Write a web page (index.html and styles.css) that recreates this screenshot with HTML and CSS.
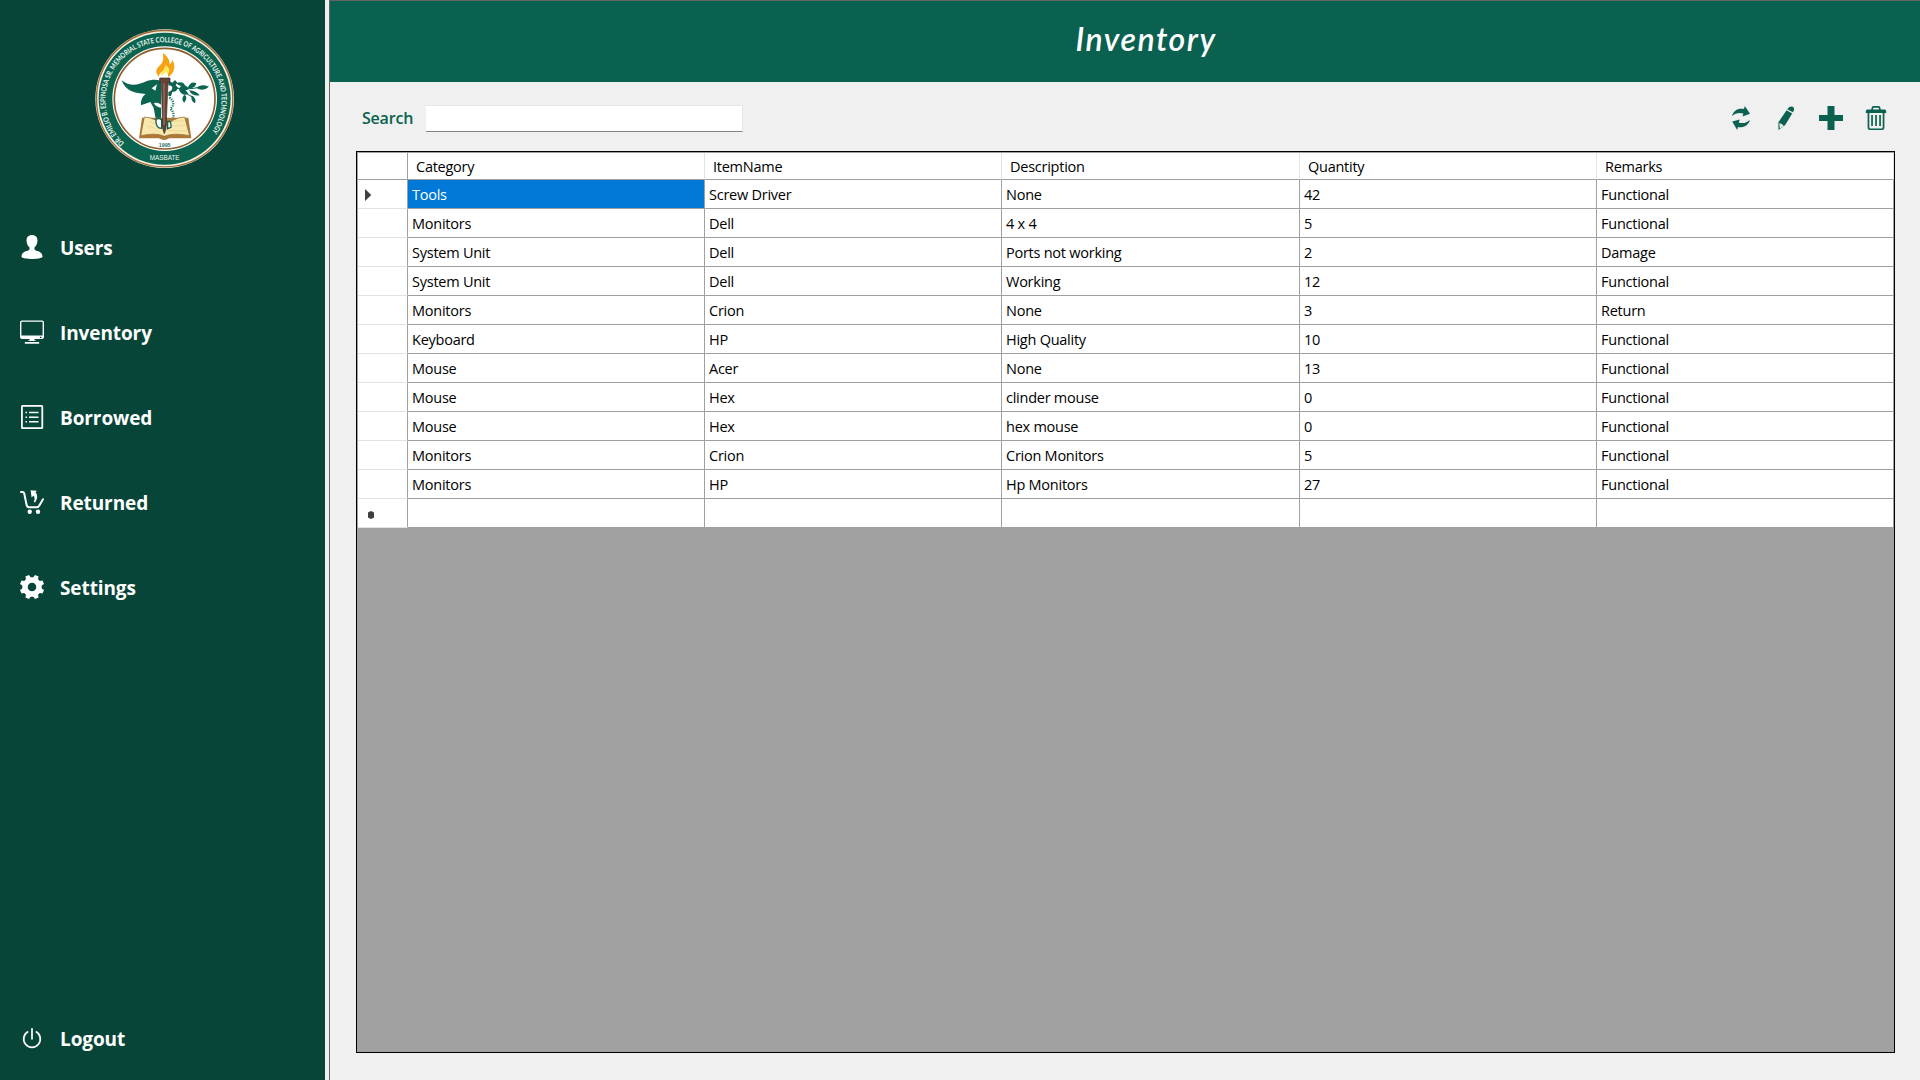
FILE: index.html
```html
<!DOCTYPE html>
<html lang="en">
<head>
<meta charset="utf-8">
<title>Inventory</title>
<link rel="stylesheet" href="styles.css">
</head>
<body>
<div class="app">
  <aside class="sidebar">
    <svg class="seal" viewBox="0 0 480 468">
      <defs>
        <path id="ring" d="M118 369 A174 174 0 1 1 363 359"/>
      </defs>
      <circle cx="239" cy="236" r="208" fill="#f6f1e4"/>
      <circle cx="239" cy="236" r="204.500" fill="none" stroke="#a06a35" stroke-width="4"/>
      <circle cx="239" cy="236" r="198" fill="#0b6450"/>
      <circle cx="239" cy="236" r="157" fill="#fff"/>
      <circle cx="239" cy="236" r="151" fill="#fff" stroke="#8d5d2c" stroke-width="5"/>
      <text class="seal-ring"><textPath href="#ring" textLength="792" lengthAdjust="spacingAndGlyphs">DR. EMILIO B. ESPINOSA SR. MEMORIAL STATE COLLEGE OF AGRICULTURE AND TECHNOLOGY</textPath></text>
      <text class="seal-place" x="239" y="421">MASBATE</text>
      <text class="seal-year" x="239" y="380">1995</text>
      <path fill="#0b6450" d="M110 181C138 204 164 192 184 184C200 178 216 178 228 183V300L212 296L206 264L196 246L168 256Q166 232 182 222C150 219 122 215 110 181Z"/>
      <path fill="#0b6450" d="M250 182L262 188L270 180L277 188L272 196L280 204L272 214L262 216L258 228H250V216Q262 212 262 204Q262 196 250 196Z"/>
      <path fill="#fff" d="M200 205L216 193L211 212ZM206 249Q220 246 228 254V263Q214 262 206 249Z"/>
      <path fill="#0b6450" d="M281 206Q296 184 312 206Q296 218 281 206ZM274 189Q294 182 300 196Q284 204 274 189ZM308 204Q318 182 334 190Q330 208 308 204ZM334 204Q346 190 372 200Q354 216 334 204ZM282 210Q304 206 310 222Q292 230 282 210ZM312 211Q334 212 344 226Q322 230 312 211ZM298 224Q310 230 298 248Q286 238 298 224ZM320 226Q336 236 330 250Q316 244 320 226Z"/>
      <path fill="none" stroke="#0b6450" stroke-width="3" d="M270 204Q310 210 342 202M282 208L324 232"/>
      <path fill="none" stroke="#2f8069" stroke-width="7" stroke-dasharray="4 3" d="M253 232Q275 250 256 266Q274 283 258 306L263 317"/>
      <path fill="#ad7938" d="M171 293L162 355H222Q239 365 252 355H319L310 293Z"/>
      <path fill="#f9e8ad" stroke="#8d622e" stroke-width="2" d="M178 291Q217 293 238 325Q260 293 299 291L314 347Q266 337 238 349Q214 337 167 347Z"/>
      <path fill="none" stroke="#e3cd8e" stroke-width="2" d="M191 304Q214 308 224 325M185 318Q208 320 222 338M263 304L296 302M257 318L301 317M251 332L305 333"/>
      <path fill="#fff" stroke="#0b6450" stroke-width="4" d="M213 298Q222 292 230 300V325Q211 325 213 298ZM248 304Q260 302 258 322L248 326Z"/>
      <path fill="#664336" stroke="#3d2824" stroke-width="2" d="M224 174H255V187H249L243 326L238 341L233 326L229 187H224Z"/>
      <path stroke="#a78168" stroke-width="3" d="M237 190V315"/>
      <path fill="#f5a314" d="M222 171C204 151 220 143 230 130C239 117 232 106 235 99C251 114 256 125 253 134C264 124 260 122 262 119C276 142 264 163 249 171C251 157 242 146 240 139C238 156 221 157 222 171Z"/>
      <path fill="#ffe75a" d="M227 168C226 155 245 149 241 133C252 146 259 149 248 163C243 157 242 157 242 157Z"/>
    </svg>

    <nav class="menu">
      <a class="item">
        <svg class="icon" viewBox="0 0 24 24"><path d="M12 0C8 0 6.200 2.800 6.600 6.500C6.800 9 8 11 9.500 12.600C10 14.800 8.800 15.300 6.500 16.100C3 17.300 1.500 18.700 1.500 22C4 24.600 20 24.600 22.500 22C22.500 18.700 21 17.300 17.500 16.100C15.200 15.300 14 14.800 14.500 12.600C16 11 17.200 9 17.400 6.500C17.800 2.800 16 0 12 0Z"/></svg>
        <span>Users</span>
      </a>
      <a class="item">
        <svg class="icon" viewBox="0 0 24 24"><path fill-rule="evenodd" d="M2 .4H22Q24 .4 24 2.400V17Q24 19 22 19H14.500V20.500H16V21H8V20.500H9.500V19H2Q0 19 0 17V2.400Q0 .4 2 .4ZM1.400 2.300V15.500H22.600V2.300Q22.600 1.700 22 1.700H2Q1.400 1.700 1.400 2.300Z"/><path d="M5 22H19Q20 23.800 18.500 23.800H5.500Q4 23.800 5 22Z"/><path class="speck" d="M20 16.700h1.500v1.200H20z"/></svg>
        <span>Inventory</span>
      </a>
      <a class="item">
        <svg class="icon line" viewBox="0 0 24 24"><rect x="1.900" y=".9" width="20.400" height="22.200" rx=".7" stroke-width="1.800"/><path stroke-width="1.600" d="M9 7.500H18.500M9 12.200H18.500M9 16.800H18.500M5.500 7.500H7M5.500 12.200H7M5.500 16.800H7"/></svg>
        <span>Borrowed</span>
      </a>
      <a class="item">
        <svg class="icon" viewBox="0 0 24 24"><path class="stroke" d="M1 2H2.500Q3.800 2 4.200 3.300L6.500 14.500Q7.100 17.300 9 17.300H16.800Q18.500 17.300 19.200 15.700L23 9.300"/><circle cx="9.700" cy="21.800" r="2.200"/><circle cx="18" cy="21.800" r="2.200"/><path d="M10.600 .2L16.800 .7L15.500 2.600C17.500 4.600 18.200 8.300 15 12.400L13.800 11.800C15.200 9 14.800 6.800 13.300 5.700L11.600 7.600Z"/></svg>
        <span>Returned</span>
      </a>
      <a class="item">
        <svg class="icon" viewBox="0 0 24 24"><path fill-rule="evenodd" d="M6.500 .9L9 0L10.600 2.300H13.400L15 0L18.600 1.500L18 4.200L19.800 6L22.500 5.400L24 9L21.700 10.600V13.400L24 15L22.500 18.600L19.800 18L18 19.800L18.600 22.500L15 24L13.400 21.700H10.600L9 24L5.400 22.500L6 19.800L4.200 18L1.500 18.600L0 15L2.300 13.400V10.600L0 9L1.500 5.400L4.200 6L6 4.200L5.400 1.500ZM12 7.700A4.300 4.300 0 1 0 12 16.300A4.300 4.300 0 1 0 12 7.700Z"/></svg>
        <span>Settings</span>
      </a>
      <a class="item logout">
        <svg class="icon line" viewBox="0 0 24 24"><path stroke-width="1.700" d="M12 2.200V13.500M8.200 5.600A8.300 8.300 0 1 0 15.800 5.600"/></svg>
        <span>Logout</span>
      </a>
    </nav>
  </aside>

  <main class="panel">
    <header class="banner"><h1>Inventory</h1></header>
    <section class="content">
      <div class="toolbar">
        <label class="search-label" for="search">Search</label>
        <input class="search" id="search" type="text">
        <div class="actions">
          <svg class="tool" viewBox="0 0 24 24"><path d="M3 10C4.500 4.500 9 1.800 15 3L15.800 0L21 7.800L13.500 10.600L14.300 7.600C10 6.300 6.500 7 3 10ZM21 14C19.500 19.500 14 22.200 9 21L8.200 24L3.200 15.500L10.800 13.400L9.700 16.500C14 17.800 17.500 17 21 14Z"/></svg>
          <svg class="tool" viewBox="0 0 24 24"><path d="M13.800 2.500Q16-.5 18.800 .8Q21 2.200 19.500 5.200L18.900 6.200L13.200 3.200ZM12.600 4.300L18.200 7.400L11.200 19L4.500 24L4.400 16.200Z"/><path class="cut" d="M5.300 17.300Q7.800 17 9.800 20L5.800 22.600Z"/></svg>
          <svg class="tool" viewBox="0 0 24 24"><path d="M8.500 0H15.500V9H24V15H15.500V24H8.500V15H0V9H8.500Z"/></svg>
          <svg class="tool" viewBox="0 0 24 24"><path fill-rule="evenodd" d="M7.200 3.500L7.800 1.200Q8.200 0 9.500 0H14.500Q15.800 0 16.200 1.200L16.800 3.500H20.500Q22 3.500 22.200 5V7H20.400V21.500Q20.400 24 17.900 24H6.100Q3.600 24 3.600 21.500V7H1.800V5Q2 3.500 3.500 3.500ZM8.900 3.500H15.100L14.600 1.700H9.400ZM5.300 7V21.200Q5.300 22.400 6.500 22.400H17.500Q18.700 22.400 18.700 21.200V7Z"/><path d="M7.200 9H8.900V20H7.200ZM11.200 9H12.900V20H11.200ZM15.200 9H16.900V20H15.200Z"/></svg>
        </div>
      </div>

      <div class="grid-frame">
        <table class="grid">
          <colgroup><col class="c-mark"><col class="c-a"><col class="c-a"><col class="c-b"><col class="c-a"><col class="c-a"></colgroup>
          <thead><tr><th></th><th>Category</th><th>ItemName</th><th>Description</th><th>Quantity</th><th>Remarks</th></tr></thead>
          <tbody>
            <tr><td><svg class="mark" viewBox="0 0 8 12"><path d="M1 0L7.300 6L1 12Z"/></svg></td><td class="selected">Tools</td><td>Screw Driver</td><td>None</td><td>42</td><td>Functional</td></tr>
            <tr><td></td><td>Monitors</td><td>Dell</td><td>4 x 4</td><td>5</td><td>Functional</td></tr>
            <tr><td></td><td>System Unit</td><td>Dell</td><td>Ports not working</td><td>2</td><td>Damage</td></tr>
            <tr><td></td><td>System Unit</td><td>Dell</td><td>Working</td><td>12</td><td>Functional</td></tr>
            <tr><td></td><td>Monitors</td><td>Crion</td><td>None</td><td>3</td><td>Return</td></tr>
            <tr><td></td><td>Keyboard</td><td>HP</td><td>High Quality</td><td>10</td><td>Functional</td></tr>
            <tr><td></td><td>Mouse</td><td>Acer</td><td>None</td><td>13</td><td>Functional</td></tr>
            <tr><td></td><td>Mouse</td><td>Hex</td><td>clinder mouse</td><td>0</td><td>Functional</td></tr>
            <tr><td></td><td>Mouse</td><td>Hex</td><td>hex mouse</td><td>0</td><td>Functional</td></tr>
            <tr><td></td><td>Monitors</td><td>Crion</td><td>Crion Monitors</td><td>5</td><td>Functional</td></tr>
            <tr><td></td><td>Monitors</td><td>HP</td><td>Hp Monitors</td><td>27</td><td>Functional</td></tr>
            <tr class="new-row"><td><svg class="mark star" viewBox="0 0 8 8"><path d="M3.200 .3H4.800L7 1.500V6.500L4.800 7.700H3.200L1 6.500V1.500Z"/></svg></td><td></td><td></td><td></td><td></td><td></td></tr>
          </tbody>
        </table>
      </div>
    </section>
  </main>
</div>
</body>
</html>
```
FILE: styles.css
```css
* { box-sizing: border-box; }

body {
  margin: 0;
  background: #f0f0f0;
  font-family: "Open Sans", "Noto Sans", sans-serif;
  overflow: hidden;
}

.app {
  display: flex;
  gap: 4px;
  width: 1920px;
  height: 1080px;
}

/* Sidebar */
.sidebar {
  width: 325px;
  flex: none;
  display: flex;
  flex-direction: column;
  padding-top: 20px;
  background: #074538;
}

.seal {
  width: 160px;
  height: 156px;
  margin-left: 85px;
  flex: none;
}

.seal-ring {
  font: 700 22px "Lato", sans-serif;
  fill: #eef5ef;
}

.seal-place,
.seal-year {
  font: 19px "Liberation Sans", sans-serif;
  fill: #eef5ef;
  text-anchor: middle;
}

.seal-year {
  font-size: 16px;
  font-weight: 700;
  fill: #27705f;
}

.menu {
  flex: 1;
  display: flex;
  flex-direction: column;
  padding: 28px 0 0 20px;
}

.item {
  display: flex;
  align-items: center;
  gap: 16px;
  height: 85px;
  color: #fff;
  font-size: 19px;
  font-weight: 700;
  line-height: 26px;
  letter-spacing: -0.1px;
}

.item span { padding-top: 2px; }

.icon {
  width: 24px;
  height: 24px;
  fill: #fff;
}

.icon.line {
  fill: none;
  stroke: #fff;
}

.icon .stroke {
  fill: none;
  stroke: #fff;
  stroke-width: 2;
  stroke-linecap: round;
}

.icon .speck { fill: #074538; }

.logout { margin-top: auto; }

/* Main panel */
.panel {
  flex: 1;
  display: flex;
  flex-direction: column;
  border-top: 1px solid #646464;
  border-left: 1px solid #646464;
}

.banner {
  height: 81px;
  flex: none;
  padding: 15px 0 0 42px;
  background: #0a614f;
  text-align: center;
}

.banner h1 {
  margin: 0;
  color: #fff;
  font: italic 600 32px/46px "Lato", sans-serif;
  letter-spacing: 1.5px;
}

.content {
  flex: 1;
  display: flex;
  flex-direction: column;
  padding: 23px 25px 27px 26px;
}

.toolbar {
  display: flex;
  align-items: flex-start;
  height: 46px;
  flex: none;
}

.search-label {
  width: 70px;
  padding-left: 6px;
  color: #0a614f;
  font-size: 16px;
  font-weight: 600;
  line-height: 26px;
  letter-spacing: -0.2px;
}

.search {
  width: 317px;
  height: 27px;
  border: 1px solid #e6e6e6;
  border-left: 0;
  border-bottom-color: #858585;
  background: #fff;
}

.actions {
  display: flex;
  gap: 21px;
  margin-left: auto;
  padding: 1px 7px 0 0;
}

.tool {
  width: 24px;
  height: 24px;
  fill: #0a614f;
}

.tool .cut { fill: #f0f0f0; }

/* Data grid */
.grid-frame {
  flex: 1;
  border: 1px solid #000;
  background: #a0a0a0;
  padding: 1px 0 0 1px;
}

.grid {
  width: 1536px;
  table-layout: fixed;
  border-collapse: separate;
  border-spacing: 0;
  background: #fff;
  font-size: 14.5px;
  letter-spacing: -0.25px;
  color: #000;
}

.c-mark { width: 50px; }
.c-a { width: 297px; }
.c-b { width: 298px; }

.grid th,
.grid td {
  height: 29px;
  padding: 2px 0 0 4px;
  border-right: 1px solid #a0a0a0;
  border-bottom: 1px solid #a0a0a0;
  text-align: left;
  font-weight: 400;
  line-height: 20px;
  white-space: nowrap;
}

.grid th {
  height: 27px;
  padding-left: 8px;
  border-right-color: #e3e3e3;
}

.grid th:first-child { border-right-color: #a0a0a0; }

.grid td:first-child { border-bottom-color: #e3e3e3; }

.grid td.selected {
  background: #0078d7;
  color: #fff;
}

.mark {
  display: block;
  width: 8px;
  height: 12px;
  margin-left: 2px;
  fill: #404040;
}

.mark.star {
  width: 8px;
  height: 8px;
  margin: 2px 0 0 5px;
}
```
